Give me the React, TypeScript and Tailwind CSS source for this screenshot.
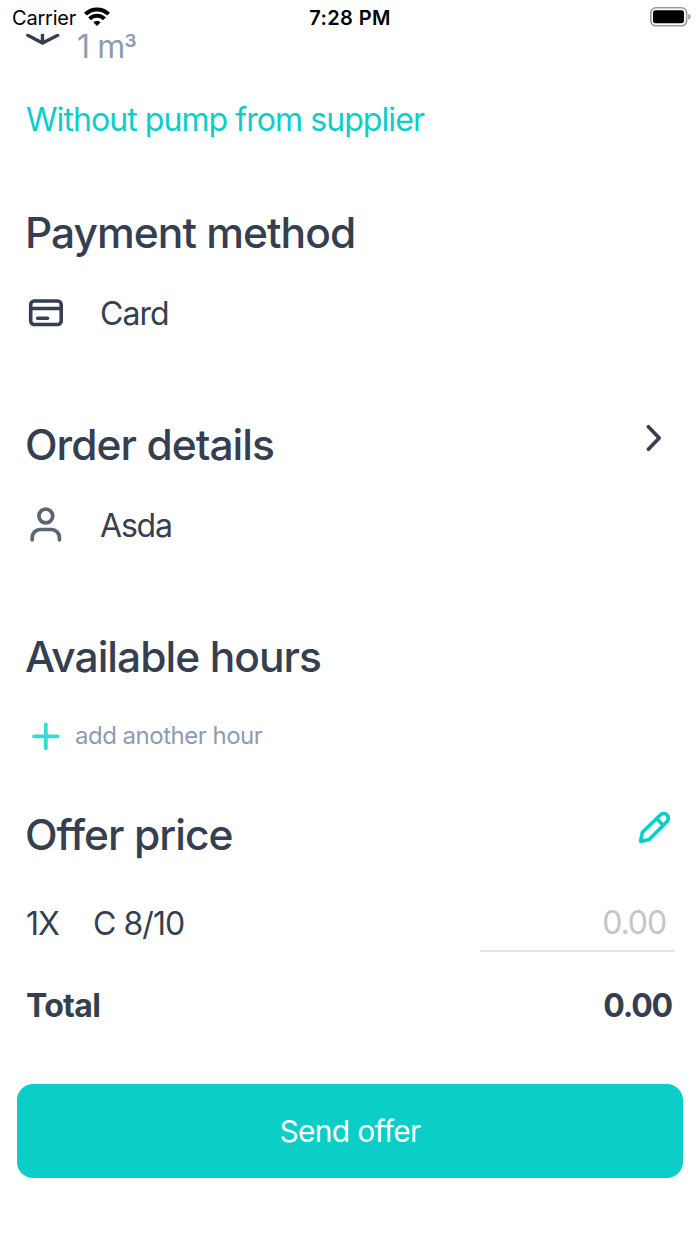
import type { ReactNode } from "react";

function Heading({ children }: { children: ReactNode }) {
    return <h2 className="-ml-px text-[42.5px] leading-[56px] font-medium tracking-[-0.97px]">{children}</h2>;
}

function StatusBar() {
    return (
        <header className="h-[34px] pt-[2px] px-3 grid grid-cols-3 items-center text-black tracking-normal">
            <div className="flex items-center gap-2">
                <span className="text-[20px] leading-8 tracking-[-0.2px]">Carrier</span>
                <svg className="-mt-0.5" width="26" height="20" viewBox="0 0 26 20" fill="none" stroke="#000" strokeWidth="4">
                    <path d="M1.4 7.2a16.4 16.4 0 0 1 23.2 0" />
                    <path d="M5.6 11.8a10.4 10.4 0 0 1 14.8 0" />
                    <path d="M13 19l-3.7-3.8a5.2 5.2 0 0 1 7.4 0z" fill="#000" stroke="none" />
                </svg>
            </div>
            <span className="text-center text-[20px] leading-8 font-semibold tracking-[0.4px]">7:28 PM</span>
            <div className="flex justify-end -mr-[3px]">
                <svg className="-mt-0.5" width="41" height="20" viewBox="0 0 41 20" fill="none">
                    <rect x="0.8" y="0.8" width="35.8" height="18" rx="5" stroke="#999" strokeWidth="1.6" />
                    <rect x="3" y="3.2" width="31" height="13" rx="2.6" fill="#000" />
                    <path d="M38.3 6.8c3 .8 3 5.2 0 6z" fill="#999" />
                </svg>
            </div>
        </header>
    );
}

export default function App() {
    return (
        <div className="w-[700px] h-[1244px] bg-white text-[#353f50] overflow-hidden font-[Inter,sans-serif] text-[32px] leading-[48px] tracking-[-0.93px]">
            <StatusBar />
            <main className="px-[26px]">
                <div className="h-[25px] flex items-start">
                    <svg className="shrink-0" width="34" height="14" viewBox="0 0 34 14" fill="none" stroke="#353f50" strokeWidth="3.4" strokeLinecap="round">
                        <path d="M1.8 1.3L16.5 9L31.7 1.3M16.5 0V9" />
                    </svg>
                    <span className="ml-[17px] leading-[26px] text-[#8f9bb0]">
                        1 m<span className="inline-block origin-left scale-x-90 translate-y-[3px]">³</span>
                    </span>
                </div>

                <p className="mt-[37px] text-[#0bcec9]">Without pump from supplier</p>

                <section className="mt-[61px]">
                    <Heading>Payment method</Heading>
                    <div className="mt-[29px] flex items-center">
                        <svg className="-mt-0.5" width="40" height="40" viewBox="0 0 40 40" fill="none" stroke="#353f50" strokeWidth="3.6" strokeLinecap="round">
                            <rect x="4.7" y="8" width="30.5" height="23.5" rx="3.5" />
                            <path d="M4.7 15.5h30.5M11.6 25.2h10" />
                        </svg>
                        <span className="ml-[34px]">Card</span>
                    </div>
                </section>

                <section className="mt-[79px]">
                    <div className="flex items-center justify-between">
                        <Heading>Order details</Heading>
                        <svg className="mr-3 -mt-3.5" width="18" height="28" viewBox="0 0 18 28" fill="none" stroke="#353f50" strokeWidth="3.7" strokeLinecap="round" strokeLinejoin="round">
                            <path d="M4.4 2.8L15.2 14L4.4 25.2" />
                        </svg>
                    </div>
                    <div className="mt-[29px] flex items-center">
                        <svg className="-mt-0.5" width="40" height="40" viewBox="0 0 40 40" fill="none" stroke="#5c6672" strokeWidth="3.7" strokeLinecap="round">
                            <circle cx="19.8" cy="11" r="6.9" />
                            <path d="M6.2 34.8V32.5a8 8 0 0 1 8-8h11.2a8 8 0 0 1 8 8v2.3" />
                        </svg>
                        <span className="ml-[34px] tracking-[-1.2px]">Asda</span>
                    </div>
                </section>

                <section className="mt-[79px]">
                    <Heading>Available hours</Heading>
                    <button className="mt-[27px] flex items-center text-2xl leading-[48px] tracking-[-0.5px] text-[#8f9bb0]">
                        <svg width="40" height="40" viewBox="0 0 40 40" fill="none" stroke="#34dad4" strokeWidth="3.8" strokeLinecap="round">
                            <path d="M8 20.3h23.7M19.8 8.5v23.7" />
                        </svg>
                        <span className="ml-[9px]">add another hour</span>
                    </button>
                </section>

                <section className="mt-[47px]">
                    <div className="flex items-center justify-between">
                        <Heading>Offer price</Heading>
                        <svg className="mr-[2px] -mt-4" width="36" height="36" viewBox="0 0 36 36" fill="none" stroke="#0bcec9" strokeWidth="3.6" strokeLinecap="round" strokeLinejoin="round">
                            <path d="M4.6 32.4L6.4 23.2L24.8 5.5a4.7 4.7 0 0 1 6.5 6.7L13.2 30.6z" />
                            <path d="M20.6 9.6L27.2 16.2" />
                        </svg>
                    </div>
                    <div className="mt-[37px] flex items-start justify-between">
                        <div className="flex">
                            <span>1X</span>
                            <span className="ml-[34px]">C 8/10</span>
                        </div>
                        <div className="w-[195px] h-[52px] -mr-px pr-[9px] border-b-2 border-[#e3e3e3] text-right leading-[46px] tracking-[-1.1px] text-[#c5c5c5]">0.00</div>
                    </div>
                    <div className="mt-[30px] flex justify-between font-bold">
                        <span className="tracking-[-0.7px]">Total</span>
                        <span className="mr-[2px] tracking-[-1.2px]">0.00</span>
                    </div>
                </section>
            </main>
            <div className="mt-[54px] px-[17px]">
                <button className="w-full h-[94px] rounded-2xl bg-[#0bcec9] text-white text-[30px] tracking-[-0.7px]">Send offer</button>
            </div>
        </div>
    );
}
